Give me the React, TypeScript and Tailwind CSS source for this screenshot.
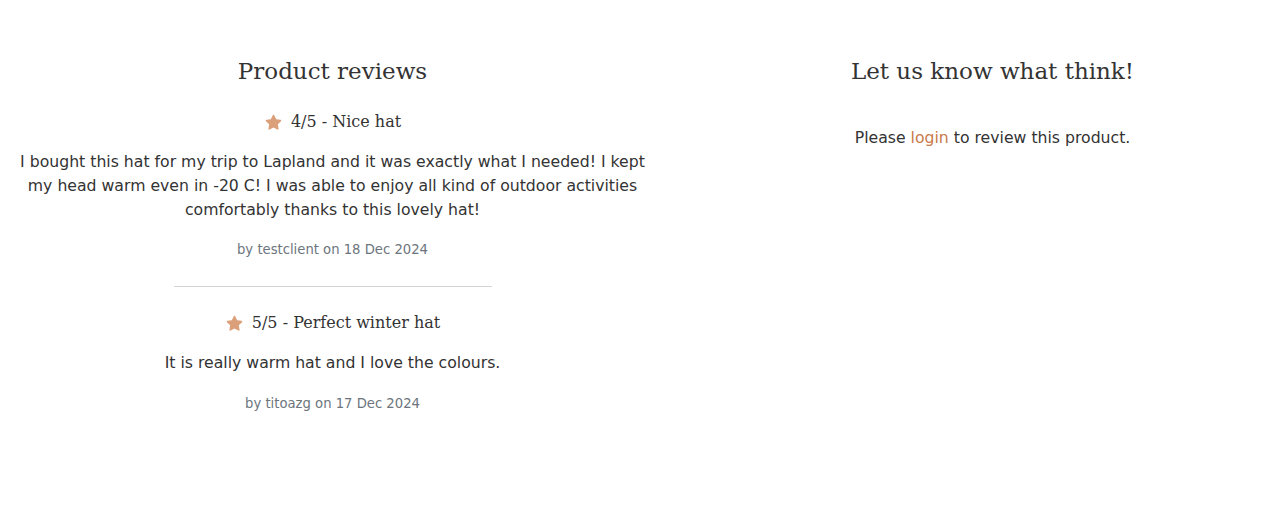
import React from 'react'

const reviews = [
  {
    rating: '4/5',
    title: 'Nice hat',
    body: 'I bought this hat for my trip to Lapland and it was exactly what I needed! I kept my head warm even in -20 C! I was able to enjoy all kind of outdoor activities comfortably thanks to this lovely hat!',
    author: 'testclient',
    date: '18 Dec 2024',
  },
  {
    rating: '5/5',
    title: 'Perfect winter hat',
    body: 'It is really warm hat and I love the colours.',
    author: 'titoazg',
    date: '17 Dec 2024',
  },
]

const serif = "font-['DejaVu_Serif',serif]"

const Star = () => (
  <svg viewBox="0 0 24 24" className="w-[19px] h-[19px] mr-[8px] fill-[#dba07a]">
    <path d="M12 2.2c.4 0 .7.2.9.6l2.5 5 5.5.8c.9.1 1.2 1.2.6 1.8l-4 3.9.9 5.5c.2.9-.8 1.5-1.5 1.1L12 18.3l-4.9 2.6c-.8.4-1.7-.2-1.5-1.1l.9-5.5-4-3.9c-.6-.6-.3-1.7.6-1.8l5.5-.8 2.5-5c.2-.4.5-.6.9-.6z" />
  </svg>
)

const App = () => {
  return (
    <div className="flex bg-white min-h-[508px] text-[#333] font-['DejaVu_Sans',sans-serif]">
      <div className="w-[665px] px-[15px] pt-[56px] text-center">
        <h2 className={`${serif} text-[23px] leading-[31px] text-[#333]`}>Product reviews</h2>

        {reviews.map((r, i) => (
          <div key={r.author}>
            {i > 0 && <hr className="w-[318px] mx-auto border-t border-[#d4d4d4] mt-[26px] mb-[24px]" />}
            <div className={i === 0 ? 'mt-[23px]' : ''}>
              <div className={`${serif} flex items-center justify-center text-[16px] leading-[24px] mb-4`}>
                <Star />
                <span>{r.rating} - {r.title}</span>
              </div>
              <p className={`text-[15.7px] leading-[24px] ${i === 0 ? 'mb-[17px]' : 'mb-[18px]'}`}>{r.body}</p>
              <p className="text-[13.2px] leading-[21px] text-[#6c757d]">
                by {r.author} on {r.date}
              </p>
            </div>
          </div>
        ))}
      </div>

      <div className="w-[579px] ml-[38px] pt-[56px] text-center">
        <h2 className={`${serif} text-[23px] leading-[31px] text-[#333]`}>Let us know what think!</h2>
        <p className="mt-[39px] text-[15.7px] leading-[24px]">
          Please <a href="#" className="text-[#c87a4a]">login</a> to review this product.
        </p>
      </div>
    </div>
  )
}

export default App
